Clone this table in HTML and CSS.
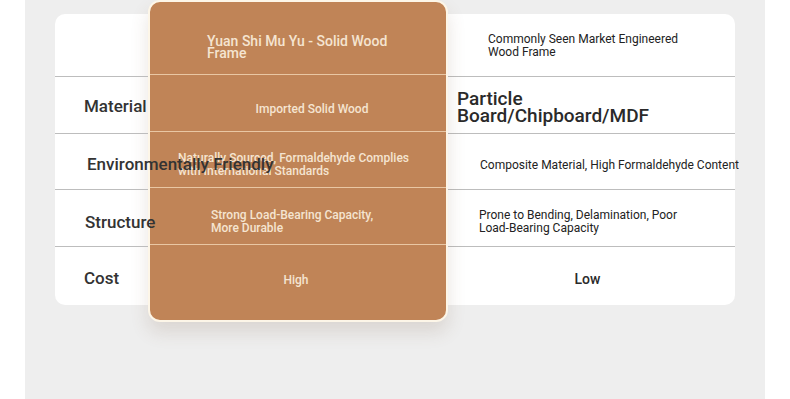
FILE: index.html
```html
<!DOCTYPE html>
<html>
<head>
<meta charset="utf-8">
<link rel="stylesheet" href="styles.css">
</head>
<body>
<div class="panel">
  <div class="compare">
    <div class="cell label head"></div>
    <div class="feature">
      <div class="fcell fhead"><span class="ftext ftitle">Yuan Shi Mu Yu - Solid Wood Frame</span></div>
      <div class="fcell frow f-material"><span class="ftext">Imported Solid Wood</span></div>
      <div class="fcell frow f-env"><span class="ftext f-wide">Naturally Sourced, Formaldehyde Complies with International Standards</span></div>
      <div class="fcell frow f-struct"><span class="ftext f-narrow">Strong Load-Bearing Capacity, More Durable</span></div>
      <div class="fcell frow ffoot"><span class="ftext">High</span></div>
    </div>
    <div class="cell other head o-head"><span class="otext o-title">Commonly Seen Market Engineered Wood Frame</span></div>

    <div class="cell label row l-material"><span>Material</span></div>
    <div class="cell other row o-material"><span class="otext o-big">Particle Board/Chipboard/MDF</span></div>

    <div class="cell label row l-env"><span>Environmentally Friendly</span></div>
    <div class="cell other row o-env"><span class="otext nowrap">Composite Material, High Formaldehyde Content</span></div>

    <div class="cell label row l-struct"><span>Structure</span></div>
    <div class="cell other row o-struct"><span class="otext o-prone">Prone to Bending, Delamination, Poor Load-Bearing Capacity</span></div>

    <div class="cell label row l-cost"><span>Cost</span></div>
    <div class="cell other row o-cost"><span class="otext o-low">Low</span></div>
  </div>
</div>
</body>
</html>
```

FILE: styles.css
```css
* { box-sizing: border-box; }
html, body { margin: 0; padding: 0; background: #ffffff; height: 100%; }
body { font-family: Roboto, "Noto Sans", Arial, sans-serif; }

.panel {
  margin: 0 25px;
  min-height: 399px;
  background: #eeeeee;
  padding: 14px 30px 0 30px;
}

.compare {
  display: grid;
  grid-template-columns: 93px 300px 1fr;
  grid-template-rows: 62px 57px 56px 57px 59px;
  background: #ffffff;
  border-radius: 10px;
}

.cell {
  display: flex;
  align-items: center;
  min-width: 0;
}
.cell.row { border-top: 1px solid #bdbdbd; }

.label {
  grid-column: 1;
  padding-left: 29px;
  position: relative;
  z-index: 3;
  font-size: 17px;
  font-weight: 500;
  color: #333333;
  white-space: nowrap;
}
.label span { padding-top: 2px; }
.l-env { padding-left: 32px; }
.l-env span { padding-top: 5px; }
.l-struct span { padding-top: 8px; }
.l-struct { padding-left: 30px; }
.l-cost span { padding-top: 3px; }

.other {
  grid-column: 3;
  color: #222222;
  font-size: 12px;
  line-height: 13px;
}
.otext { padding-top: 3px; }
.o-head { padding-left: 40px; }
.o-title { max-width: 200px; padding-top: 2px; }
.o-material { padding-left: 9px; }
.o-big { font-size: 19px; font-weight: 500; line-height: 17px; max-width: 215px; color: #2a2a2a; padding-top: 3px; }
.o-env { padding-left: 32px; }
.o-env .otext { padding-top: 7px; }
.nowrap { white-space: nowrap; }
.o-struct { padding-left: 31px; }
.o-prone { max-width: 210px; padding-top: 7px; }
.o-cost { justify-content: center; padding-right: 8px; }
.o-low { font-size: 14px; font-weight: 500; padding-top: 6px; color: #2a2a2a; }

.feature {
  grid-column: 2;
  grid-row: 1 / 6;
  margin-top: -14px;
  margin-bottom: -17px;
  position: relative;
  z-index: 2;
  background: #c08457;
  border: 2px solid #fdf6e8;
  border-radius: 12px;
  box-shadow: 0 10px 18px rgba(120, 90, 60, 0.16);
  display: grid;
  grid-template-rows: 72px 57px 56px 57px 76px;
  color: #f5e4d1;
  font-size: 12px;
  line-height: 13px;
  font-weight: 500;
}
.fcell { display: flex; align-items: center; padding-left: 28px; }
.frow { border-top: 1px solid #e9c7a4; }
.fhead { padding-top: 18px; padding-left: 57px; }
.ftitle { font-size: 14px; line-height: 12px; max-width: 190px; }
.f-material { justify-content: center; padding-left: 28px; padding-top: 12px; }
.f-env { padding-left: 28px; padding-top: 10px; }
.f-wide { max-width: 240px; }
.f-struct { padding-left: 61px; padding-top: 12px; }
.f-narrow { max-width: 172px; }
.ffoot { justify-content: center; padding-left: 0; padding-right: 4px; padding-bottom: 4px; }
```
